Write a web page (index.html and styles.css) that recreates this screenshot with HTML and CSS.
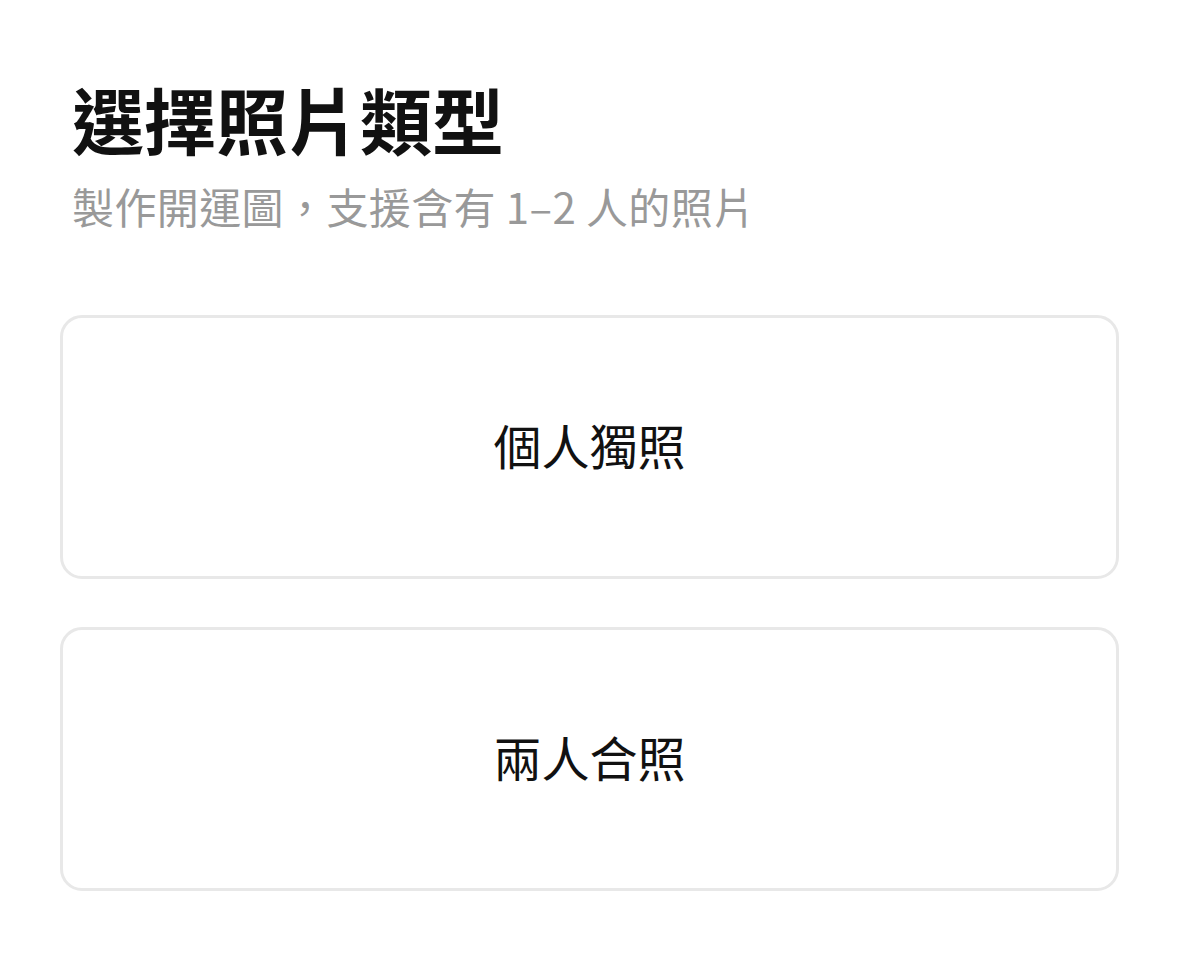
FILE: index.html
```html
<!DOCTYPE html>
<html lang="zh-Hant">
<head>
<meta charset="utf-8">
<title>選擇照片類型</title>
<link rel="stylesheet" href="styles.css">
</head>
<body>
<main class="page">
  <header class="intro">
    <h1 class="title">選擇照片類型</h1>
    <p class="subtitle">製作開運圖，支援含有 1–2 人的照片</p>
  </header>
  <div class="options">
    <button class="option" type="button">個人獨照</button>
    <button class="option" type="button">兩人合照</button>
  </div>
</main>
</body>
</html>
```
FILE: styles.css
```css
html, body {
  margin: 0;
  padding: 0;
  background: #ffffff;
}
body {
  font-family: "Noto Sans CJK TC", "Noto Sans", "Liberation Sans", sans-serif;
  color: #111111;
}
.page {
  padding: 75px 60px 0;
  display: flex;
  flex-direction: column;
}
.intro {
  padding-left: 12px;
}
.title {
  margin: 0;
  font-size: 72px;
  font-weight: 700;
  line-height: 1.2;
  color: #111111;
}
.subtitle {
  margin: 20px 0 0;
  font-size: 42px;
  font-weight: 400;
  line-height: 1.2;
  letter-spacing: 0.4px;
  color: #999999;
}
.options {
  margin-top: 83px;
  display: flex;
  flex-direction: column;
  gap: 48px;
}
.option {
  height: 264px;
  border: 3px solid #e8e8e8;
  border-radius: 22px;
  background: #ffffff;
  font-family: inherit;
  font-size: 48px;
  color: #111111;
  display: flex;
  align-items: center;
  justify-content: center;
  padding: 0 0 6px;
}
```
